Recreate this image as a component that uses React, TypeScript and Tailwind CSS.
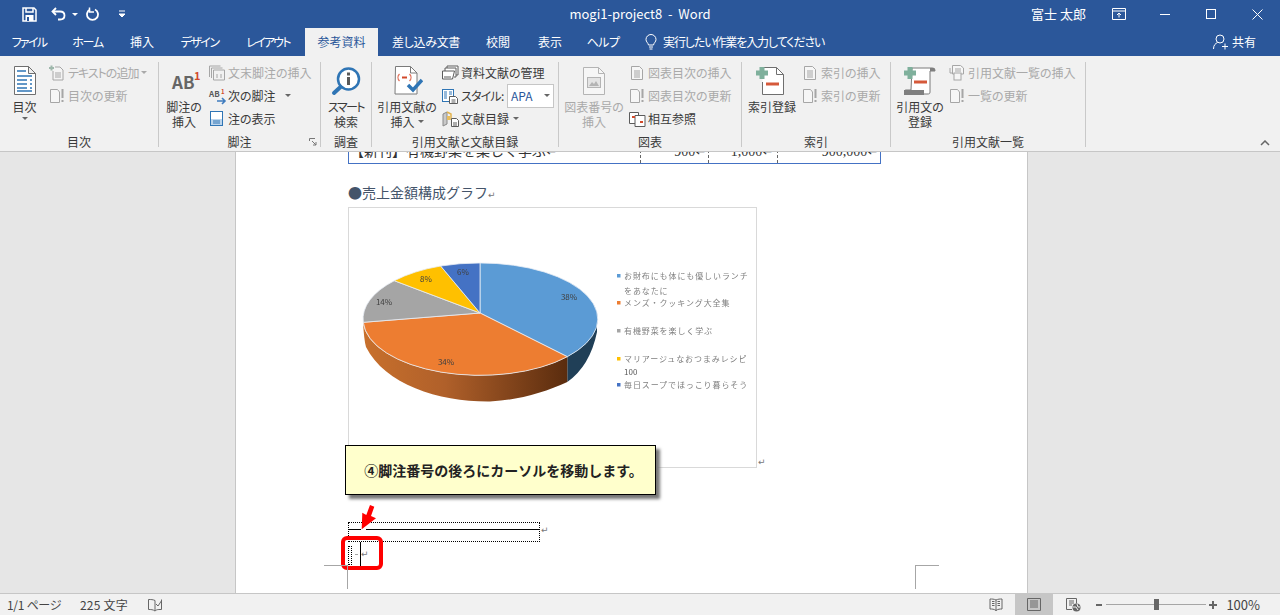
import type { ReactNode } from 'react'

/* ── Ribbon icons ───────────────────────────────────────────────────── */

const GRAY = '#a6a6a6'

function SmallIcon({ children, w = 16 }: { children: ReactNode; w?: number }) {
  return (
    <svg width={w} height="16" viewBox={`0 0 ${w} 16`} fill="none" className="shrink-0">
      {children}
    </svg>
  )
}

function AddTextIcon() {
  return (
    <SmallIcon>
      <path d="M0 3h5M2.500 .5v5" stroke="#9fb8ac" strokeWidth="2" />
      <path d="M6 2h5l3 3v10H4V6" stroke={GRAY} fill="#f4f4f4" />
      <path d="M6 8h6M6 10h6M6 12h6" stroke={GRAY} />
    </SmallIcon>
  )
}

function UpdateIcon({ color = GRAY }: { color?: string }) {
  return (
    <SmallIcon>
      <path d="M1.500 1.500h7l2 2.500v10.500h-9z" stroke={color} fill="#f6f6f6" />
      <path d="M13.500 1v9M13.500 12v2" stroke={color} strokeWidth="2" />
    </SmallIcon>
  )
}

function EndnoteIcon() {
  return (
    <SmallIcon>
      <path d="M.5 12V1h11M2.500 13V3h11M4.500 15V5h11v10z" stroke={GRAY} />
      <path d="M8 9v4M12 9v4" stroke={GRAY} />
    </SmallIcon>
  )
}

function NextNoteIcon() {
  return (
    <div className="relative h-[16px] w-[18px] shrink-0 text-[8px] leading-[11px] font-bold text-[#595959]">
      AB
      <span className="absolute left-[12px] -top-[2px] text-[6px] text-[#d2492a]">1</span>
      <svg width="10" height="8" viewBox="0 0 10 8" className="absolute left-[8px] top-[9px]">
        <path d="M0 4h8M5 1l3 3-3 3" stroke="#3f7cbf" strokeWidth="1.600" fill="none" />
      </svg>
    </div>
  )
}

function ShowNotesIcon() {
  return (
    <SmallIcon>
      <rect x="1.500" y=".5" width="12" height="14" stroke="#2f75b5" fill="#fff" />
      <rect x="2" y="8" width="11" height="6" fill="#bcd5ec" />
      <path d="M4 10h7M4 12h7" stroke="#2f75b5" />
    </SmallIcon>
  )
}

function ManageIcon() {
  return (
    <SmallIcon w={17}>
      <path d="M5 4V1h11v9h-2" stroke="#5c5c5c" fill="#fff" />
      <path d="M3 6V3h11v9h-2" stroke="#5c5c5c" fill="#fff" />
      <path d="M.5 6h12l-2 8H.5z" stroke="#5c5c5c" fill="#fff" />
      <path d="M2 12h7" stroke="#5c5c5c" />
    </SmallIcon>
  )
}

function StyleIcon() {
  return (
    <SmallIcon w={17}>
      <rect x=".5" y="1.500" width="11" height="12" stroke="#2f75b5" fill="#fff" />
      <path d="M2 4h3M2 6h3M2 8h3M2 10h3M7 4h3M7 6h3" stroke="#2f75b5" />
      <path d="M7.500 8.500h6l2 2v5h-8z" stroke="#5c5c5c" fill="#fff" />
      <path d="M9.500 12h4M9.500 14h4" stroke="#5c5c5c" />
    </SmallIcon>
  )
}

function BibliographyIcon() {
  return (
    <SmallIcon w={18}>
      <path d="M1 3l4-2v12l-4 2z" fill="#c9c9c9" stroke="#8a8a8a" />
      <path d="M5 1l4 2v6" stroke="#e2b34d" strokeWidth="1.500" />
      <rect x="5" y="5" width="3" height="4" fill="#e9bd5c" />
      <path d="M9.500 7.500h5l2 2v6h-7z" stroke="#5c5c5c" fill="#fff" />
      <path d="M11 12h4M11 14h4" stroke="#5c5c5c" />
    </SmallIcon>
  )
}

function TableListIcon() {
  return (
    <SmallIcon>
      <path d="M2.500 1.500h8l3 3v10h-11z" stroke={GRAY} fill="#f6f6f6" />
      <path d="M5 6h6M5 8h6M5 10h6M5 12h6" stroke={GRAY} />
    </SmallIcon>
  )
}

function CrossRefIcon() {
  return (
    <SmallIcon w={17}>
      <path d="M.5 1.500h9v11h-9z" stroke="#5c5c5c" fill="#fff" />
      <path d="M6 4.500h10v11H6z" stroke="#5c5c5c" fill="#fff" />
      <path d="M3 6h3" stroke="#d2492a" strokeWidth="2" />
      <path d="M11 11h3" stroke="#d2492a" strokeWidth="2" />
    </SmallIcon>
  )
}

function CitationsInsertIcon() {
  return (
    <SmallIcon>
      <path d="M3.500 .5h8l3 2.500v6H3.500z" stroke={GRAY} fill="#f6f6f6" />
      <path d="M1 3v5h2" stroke={GRAY} />
      <rect x="5" y="8" width="7" height="7" stroke={GRAY} fill="#f6f6f6" />
      <path d="M6 4h6M6 6h6" stroke={GRAY} />
    </SmallIcon>
  )
}

function TocBigIcon() {
  return (
    <svg width="22" height="29" viewBox="0 0 22 29" fill="none">
      <path d="M.5 .5h14l7 7v21H.5z" fill="#fff" stroke="#6f6f6f" />
      <path d="M14.500 .5v7h7z" stroke="#6f6f6f" fill="#f0f0f0" />
      <path d="M3 5h9M3 10h15M3 14h10M3 18h10M3 22h10M3 25h15" stroke="#2f75b5" strokeWidth="1.500" />
      <path d="M16 14h2M16 18h2M16 22h2" stroke="#2f75b5" strokeWidth="1.500" />
    </svg>
  )
}

function FootnoteBigIcon() {
  return (
    <div className="relative h-[24px] w-[32px] pt-[1px] pl-[4px] text-[17px] leading-[24px] font-bold text-[#666666]">
      AB
      <span className="absolute -top-[6px] left-[26px] text-[11px] text-[#d2492a]">1</span>
    </div>
  )
}

function SearchBigIcon() {
  return (
    <svg width="32" height="32" viewBox="0 0 32 32" fill="none">
      <circle cx="18.500" cy="14" r="10.500" fill="#fff" stroke="#2f75b5" strokeWidth="2.500" />
      <path d="M10.500 22L4 28" stroke="#2f75b5" strokeWidth="4" strokeLinecap="round" />
      <rect x="17" y="12" width="3" height="8" fill="#595959" />
      <rect x="17" y="7.500" width="3" height="3" fill="#595959" />
    </svg>
  )
}

function CitationBigIcon() {
  return (
    <svg width="32" height="30" viewBox="0 0 32 30" fill="none">
      <path d="M4.500 .5h15l6.500 6.500v21h-22z" fill="#fff" stroke="#7a7a7a" />
      <path d="M19.500 .5V7H26" stroke="#7a7a7a" />
      <path d="M8.500 8c-2 2-2 5 0 7M18.500 8c2 2 2 5 0 7" stroke="#e2725b" strokeWidth="1.300" />
      <path d="M11 11.500h5" stroke="#d2492a" strokeWidth="2" />
      <path d="M17 19l5 5 9-10" stroke="#2f75b5" strokeWidth="3.500" />
    </svg>
  )
}

function CaptionBigIcon() {
  return (
    <svg width="24" height="30" viewBox="0 0 24 30" fill="none">
      <path d="M1.500 1.500h15l6 6v21h-21z" fill="#f6f6f6" stroke="#b4b4b4" />
      <path d="M16.500 1.500v6h6" stroke="#b4b4b4" />
      <rect x="5.500" y="11.500" width="13" height="10" stroke="#b4b4b4" fill="#e4e4e4" />
      <path d="M7 20l3-4 2 2 2-3 3 5z" fill="#b4b4b4" />
    </svg>
  )
}

function IndexBigIcon() {
  return (
    <svg width="32" height="30" viewBox="0 0 32 30" fill="none">
      <path d="M6.500 8V1.500h14l7 7v20h-21V16" fill="#fff" stroke="#6f6f6f" />
      <path d="M20.500 1.500v7h7" stroke="#6f6f6f" />
      <path d="M0 7h12M6 1v12" stroke="#7fb09c" strokeWidth="5" />
      <path d="M10 18h13" stroke="#d5593a" strokeWidth="3" />
    </svg>
  )
}

function CitationMarkBigIcon() {
  return (
    <svg width="32" height="30" viewBox="0 0 32 30" fill="none">
      <path d="M8 2h20c2 0 3 1 3 3H26v21c0 2-1 2-3 2H2c-2-1-2-4 0-4h5z" fill="#fff" stroke="#7a7a7a" />
      <path d="M0 29v-5h20v5z" fill="#7f7f7f" />
      <path d="M26 2h4c1 0 1 1 1 3h-5z" fill="#7f7f7f" />
      <path d="M0 7h12M6 1v12" stroke="#7fb09c" strokeWidth="5" />
      <path d="M10 16h13" stroke="#d5593a" strokeWidth="3" />
    </svg>
  )
}

function Caret({ className = '' }: { className?: string }) {
  return <span className={`inline-block h-0 w-0 border-x-[3px] border-t-[3px] border-x-transparent border-t-[#666666] ${className}`} />
}

/* ── Ribbon parts ───────────────────────────────────────────────────── */

function SmallBtn({ icon, label, off, caret, kana }: { icon: ReactNode; label: string; off?: boolean; caret?: ReactNode; kana?: boolean }) {
  return (
    <div className={`flex h-[23px] items-center whitespace-nowrap ${off ? 'text-[#a9a9a9]' : 'text-[#3a3a3a]'}`}>
      <div className="w-[19px] shrink-0">{icon}</div>
      <span className={kana ? 'tracking-[-1px]' : ''}>{label}</span>
      {caret}
    </div>
  )
}

function BigBtn({ w, icon, lines, off, caret, kana }: { w: string; icon: ReactNode; lines: string[]; off?: boolean; caret?: ReactNode; kana?: boolean }) {
  return (
    <div className={`flex shrink-0 flex-col items-center leading-[15px] ${w} ${off ? 'text-[#a9a9a9]' : 'text-[#3a3a3a]'}`}>
      <div className="flex h-[37px] items-center justify-center">{icon}</div>
      {lines.map((l, i) => (
        <div key={l} className={`whitespace-nowrap ${kana && i === 0 ? 'tracking-[-1.5px]' : ''}`}>{l}</div>
      ))}
      {caret}
    </div>
  )
}

function Group({ w, label, children, launcher }: { w: string; label: string; children: ReactNode; launcher?: boolean }) {
  return (
    <div className={`relative flex h-[85px] shrink-0 flex-col border-r border-[#c9c9c9] ${w}`}>
      <div className="flex h-[72px]">{children}</div>
      <div className="h-[13px] text-center leading-[16px] whitespace-nowrap text-[#3a3a3a]">{label}</div>
      {launcher && (
        <svg width="8" height="8" viewBox="0 0 8 8" fill="none" className="absolute right-[3px] bottom-[1px]">
          <path d="M.5 3V.5H6M3 3l4 4M7 4v3H4" stroke="#777777" />
        </svg>
      )}
    </div>
  )
}

const tabs = [
  { label: 'ファイル', w: 'w-[58px]', track: 'tracking-[-1.7px]' },
  { label: 'ホーム', w: 'w-[60px]', track: 'tracking-[-1.2px] pr-[1px]' },
  { label: '挿入', w: 'w-[48px]', track: '' },
  { label: 'デザイン', w: 'w-[68px]', track: 'tracking-[-1.5px] pr-[1px]' },
  { label: 'レイアウト', w: 'w-[71px]', track: 'tracking-[-1.8px] pr-[3px]' },
  { label: '参考資料', w: 'w-[73px]', track: '', active: true },
  { label: '差し込み文書', w: 'w-[96px]', track: 'tracking-[-0.3px]' },
  { label: '校閲', w: 'w-[48px]', track: '' },
  { label: '表示', w: 'w-[56px]', track: '' },
  { label: 'ヘルプ', w: 'w-[50px]', track: 'tracking-[-0.5px]' },
]

/* ── Chart ──────────────────────────────────────────────────────────── */

const legend = [
  { y: 276, color: '#5b9bd5', lines: ['お財布にも体にも優しいランチ', 'をあなたに'] },
  { y: 303, color: '#ed7d31', lines: ['メンズ・クッキング大全集'] },
  { y: 331, color: '#a5a5a5', lines: ['有機野菜を楽しく学ぶ'] },
  { y: 359, color: '#ffc000', lines: ['マリアージュなおつまみレシピ', '100'] },
  { y: 385, color: '#4472c4', lines: ['毎日スープでほっこり暮らそう'] },
]

const pieLabels = [
  { x: 569, y: 300, t: '38%' },
  { x: 446, y: 365, t: '34%' },
  { x: 384, y: 305, t: '14%' },
  { x: 426, y: 282, t: '8%' },
  { x: 463, y: 275, t: '6%' },
]

function PieChart() {
  return (
    <svg width="407" height="259" viewBox="349 208 407 259" className="block font-['Noto_Sans_CJK_JP',sans-serif]">
      <defs>
        <linearGradient id="orangeSide" x1="0" x2="1" y1="0" y2="0">
          <stop offset="0" stopColor="#c8702c" />
          <stop offset="0.4" stopColor="#b0602a" />
          <stop offset="1" stopColor="#5a2c0e" />
        </linearGradient>
      </defs>
      <path d="M597 320A117 56 0 0 1 567.300 356.700V382Q590 366 597 332Z" fill="#203f57" />
      <path d="M567.300 356.700A117 56 0 0 1 363 322Q364 340 366 347C385 385 440 402 490 401.500C520 400 545 392 567.300 382Z" fill="url(#orangeSide)" />
      <g stroke="#e8eef5" strokeWidth="0.800">
        <path d="M480 313V263A117 56 0 0 1 567.300 356.700Z" fill="#5b9bd5" />
        <path d="M480 313L567.300 356.700A117 56 0 0 1 363.300 322.300Z" fill="#ed7d31" />
        <path d="M480 313L363.300 322.300A117 56 0 0 1 394.300 280.700Z" fill="#a5a5a5" />
        <path d="M480 313L394.300 280.700A117 56 0 0 1 440.700 266Z" fill="#ffc000" />
        <path d="M480 313L440.700 266A117 56 0 0 1 480 263Z" fill="#4472c4" />
      </g>
      {pieLabels.map((l) => (
        <text key={l.t} x={l.x} y={l.y} textAnchor="middle" fontSize="8" fill="#404040">{l.t}</text>
      ))}
      {legend.map((g) => (
        <g key={g.y}>
          <rect x="617" y={g.y - 2} width="3.500" height="3.500" fill={g.color} />
          {g.lines.map((t, i) => (
            <text
              key={t}
              x="624"
              y={g.y + 3 + i * (g.lines[1] === '100' ? 13 : 15)}
              fontSize="8"
              letterSpacing={t === '100' ? 0 : 0.9}
              fill={t === '100' ? '#595959' : '#7f7f7f'}
            >
              {t}
            </text>
          ))}
        </g>
      ))}
    </svg>
  )
}

/* ── App ────────────────────────────────────────────────────────────── */

export default function App() {
  return (
    <div className="relative flex h-[615px] w-[1280px] flex-col overflow-hidden bg-[#e6e6e6] font-['Noto_Sans_CJK_JP','Noto_Sans','DejaVu_Sans',sans-serif] text-[12px] [font-feature-settings:'palt']">
      {/* Title bar */}
      <div className="grid h-[28px] shrink-0 grid-cols-[1fr_auto_1fr] items-center bg-[#2b579a] text-white">
        <div className="flex items-center pl-[22px]">
          <svg width="15" height="15" viewBox="0 0 15 15" fill="none">
            <path d="M1 1h11l2 2v11H1z" stroke="#fff" strokeWidth="1.500" />
            <path d="M4 1v4h7V1" stroke="#fff" strokeWidth="1.500" />
            <rect x="3.500" y="8" width="8" height="6" fill="#fff" />
            <rect x="5" y="10" width="2" height="4" fill="#2b579a" />
          </svg>
          <svg width="16" height="14" viewBox="0 0 16 14" fill="none" className="ml-[14px]">
            <path d="M5 1L1.500 4.500 5 8" stroke="#fff" strokeWidth="1.800" />
            <path d="M2 4.500h7c6 0 6 8 0 8H7" stroke="#fff" strokeWidth="1.800" />
          </svg>
          <Caret className="ml-[5px] border-t-white" />
          <svg width="14" height="14" viewBox="0 0 14 14" fill="none" className="ml-[8px]">
            <path d="M4 2.500a5.500 5.500 0 1 0 5 0" stroke="#fff" strokeWidth="1.800" />
            <path d="M3.500 .5v4.500H8" stroke="#fff" strokeWidth="1.500" />
          </svg>
          <svg width="8" height="8" viewBox="0 0 8 8" className="ml-[18px]">
            <path d="M1 1h6M1 4h6l-3 3z" stroke="#fff" fill="#fff" />
          </svg>
        </div>
        <div className="text-[13px] whitespace-pre">mogi1-project8  -  Word</div>
        <div className="flex items-center justify-end">
          <span className="mr-[9px] text-[13px] whitespace-pre">富士 太郎</span>
          <div className="flex w-[47px] justify-center">
            <svg width="14" height="12" viewBox="0 0 14 12" fill="none">
              <path d="M.5 .5h13v11H.5zM.5 3h13M7 9.500V5M5 7l2-2 2 2" stroke="#fff" />
            </svg>
          </div>
          <div className="flex w-[46px] justify-center">
            <div className="h-px w-[10px] bg-white" />
          </div>
          <div className="flex w-[46px] justify-center">
            <div className="h-[10px] w-[10px] border border-white" />
          </div>
          <div className="flex w-[46px] justify-center">
            <svg width="11" height="11" viewBox="0 0 11 11"><path d="M.5 .5l10 10M10.500 .5l-10 10" stroke="#fff" /></svg>
          </div>
        </div>
      </div>

      {/* Tabs */}
      <div className="flex h-[28px] shrink-0 items-center bg-[#2b579a] text-white">
        {tabs.map((t) => (
          <div
            key={t.label}
            className={`flex h-full items-center justify-center ${t.w} ${t.track} ${t.active ? 'bg-[#f1f1f1] text-[#2b579a]' : ''}`}
          >
            {t.label}
          </div>
        ))}
        <svg width="12" height="16" viewBox="0 0 12 16" fill="none" className="ml-[17px]">
          <path d="M3.500 11C3 8.500 1 8 1 5.500a5 5 0 0 1 10 0C11 8 9 8.500 8.500 11zM4 13h4M4.500 15h3" stroke="#fff" />
        </svg>
        <span className="ml-[6px] tracking-[-1.1px]">実行したい作業を入力してください</span>
        <div className="ml-auto flex items-center pr-[24px]">
          <svg width="15" height="16" viewBox="0 0 15 16" fill="none">
            <circle cx="7" cy="5" r="4" stroke="#fff" />
            <path d="M.5 15c0-4 2-5.500 4-6.500M9 12.500h6M12 9.500v6" stroke="#fff" />
          </svg>
          <span className="ml-[4px]">共有</span>
        </div>
      </div>

      {/* Ribbon */}
      <div className="relative flex h-[96px] shrink-0 border-b border-[#c6c6c6] bg-[#f1f1f1] pt-[6px]">
        <Group w="w-[159px]" label="目次">
          <BigBtn w="w-[49px]" icon={<TocBigIcon />} lines={['目次']} caret={<Caret className="mt-[3px]" />} />
          <div className="-mt-px">
            <SmallBtn off kana icon={<AddTextIcon />} label="テキストの追加" caret={<Caret className="ml-[3px] border-t-[#a9a9a9]" />} />
            <SmallBtn off icon={<UpdateIcon />} label="目次の更新" />
          </div>
        </Group>
        <Group w="w-[162px]" label="脚注" launcher>
          <BigBtn w="w-[50px]" icon={<FootnoteBigIcon />} lines={['脚注の', '挿入']} />
          <div className="-mt-px">
            <SmallBtn off icon={<EndnoteIcon />} label="文末脚注の挿入" />
            <SmallBtn icon={<NextNoteIcon />} label="次の脚注" caret={<Caret className="ml-[9px]" />} />
            <SmallBtn icon={<ShowNotesIcon />} label="注の表示" />
          </div>
        </Group>
        <Group w="w-[51px]" label="調査">
          <BigBtn kana w="w-[50px]" icon={<SearchBigIcon />} lines={['スマート', '検索']} />
        </Group>
        <Group w="w-[187px]" label="引用文献と文献目録">
          <BigBtn
            w="w-[70px]"
            icon={<CitationBigIcon />}
            lines={['引用文献の']}
            caret={
              <div className="flex items-center">
                挿入
                <Caret className="ml-[3px]" />
              </div>
            }
          />
          <div className="-mt-px">
            <SmallBtn icon={<ManageIcon />} label="資料文献の管理" />
            <div className="flex h-[23px] items-center whitespace-nowrap text-[#3a3a3a]">
              <div className="w-[19px] shrink-0"><StyleIcon /></div>
              <span className="w-[46px] tracking-[-0.8px]">スタイル:</span>
              <div className="flex h-[24px] w-[47px] items-center justify-between border border-[#c6c6c6] bg-white px-[3px] text-[#2b579a]">
                APA
                <Caret />
              </div>
            </div>
            <SmallBtn icon={<BibliographyIcon />} label="文献目録" caret={<Caret className="ml-[4px]" />} />
          </div>
        </Group>
        <Group w="w-[183px]" label="図表">
          <BigBtn off w="w-[70px]" icon={<CaptionBigIcon />} lines={['図表番号の', '挿入']} />
          <div className="-mt-px">
            <SmallBtn off icon={<TableListIcon />} label="図表目次の挿入" />
            <SmallBtn off icon={<UpdateIcon />} label="図表目次の更新" />
            <SmallBtn icon={<CrossRefIcon />} label="相互参照" />
          </div>
        </Group>
        <Group w="w-[149px]" label="索引">
          <BigBtn w="w-[60px]" icon={<IndexBigIcon />} lines={['索引登録']} />
          <div className="-mt-px">
            <SmallBtn off icon={<TableListIcon />} label="索引の挿入" />
            <SmallBtn off icon={<UpdateIcon />} label="索引の更新" />
          </div>
        </Group>
        <Group w="w-[195px]" label="引用文献一覧">
          <BigBtn w="w-[58px]" icon={<CitationMarkBigIcon />} lines={['引用文の', '登録']} />
          <div className="-mt-px">
            <SmallBtn off icon={<CitationsInsertIcon />} label="引用文献一覧の挿入" />
            <SmallBtn off icon={<UpdateIcon />} label="一覧の更新" />
          </div>
        </Group>
        <svg width="10" height="6" viewBox="0 0 10 6" fill="none" className="absolute right-[10px] bottom-[5px]">
          <path d="M1 5l4-4 4 4" stroke="#666666" strokeWidth="1.500" />
        </svg>
      </div>

      {/* Document */}
      <div className="h-[441px] shrink-0 overflow-hidden pl-[235px]">
        <div className="flex h-full w-[793px] flex-col overflow-hidden border-x border-[#c6c6c6] bg-white pl-[112px] font-['Liberation_Serif','Noto_Sans_CJK_JP','DejaVu_Sans',serif] text-[14px] text-[#333333] [font-feature-settings:normal]">
          <div className="grid h-[12px] w-[533px] shrink-0 grid-cols-[291px_68px_69px_1fr] overflow-hidden border-x border-b border-[#4472c4] leading-[14px]">
            <div className="-mt-[7px] pl-[1px] whitespace-nowrap">【新刊】有機野菜を楽しく学ぶ↵</div>
            <div className="-mt-[7px] border-l border-dashed border-[#666666] pr-[1px] text-right">900↵</div>
            <div className="-mt-[7px] border-l border-dashed border-[#666666] pr-[3px] text-right">1,000↵</div>
            <div className="-mt-[7px] border-l border-dashed border-[#666666] pr-[1px] text-right">900,000↵</div>
          </div>
          <div className="mt-[19px] h-[18px] leading-[18px] whitespace-nowrap text-[#44546a]">
            <span className="font-['Noto_Sans_CJK_JP',sans-serif]">●</span>売上金額構成グラフ
            <span className="text-[9px] text-[#777777]">↵</span>
          </div>
          <div className="mt-[6px] flex items-end">
            <div className="h-[261px] w-[409px] shrink-0 border border-[#d9d9d9] blur-[0.3px]">
              <PieChart />
            </div>
            <span className="ml-[1px] text-[9px] leading-[12px] text-[#777777]">↵</span>
          </div>

          {/* Footnote separator */}
          <div className="mt-[54px] flex items-center">
            <div className="h-[20px] w-[192px] shrink-0 border border-dotted border-black pt-[6px]">
              <div className="flex h-px">
                <div className="w-[12px] bg-black" />
                <div className="ml-[5px] flex-1 bg-black" />
              </div>
            </div>
            <span className="-mt-[4px] ml-[1px] text-[9px] leading-[12px] text-[#777777]">↵</span>
          </div>
          <div className="flex h-[24px] items-center">
            <div className="mt-[2px] h-[19px] w-[4px] border border-dotted border-black" />
            <div className="ml-[3px] h-px w-[3px] bg-[#a6a6a6]" />
            <div className="ml-[2px] h-[24px] w-px bg-black" />
            <span className="-mt-[1px] text-[9px] leading-[12px] text-[#777777]">↵</span>
          </div>
        </div>
      </div>

      {/* Status bar */}
      <div className="flex h-[22px] shrink-0 items-center border-t border-[#c6c6c6] bg-[#f1f1f1] pl-[7px] text-[12px] text-[#444444]">
        <span className="w-[73px] tracking-[-0.3px]">1/1 ページ</span>
        <span className="w-[68px] tracking-[0.2px]">225 文字</span>
        <svg width="14" height="14" viewBox="0 0 14 14" fill="none">
          <path d="M7 2.500C5 1.500 3 1.500 .5 1.500v10c2.500 0 4.500 0 6.500 1.500 2-1.500 2-1.500 6.500-1.500v-10" stroke="#666666" />
          <path d="M7 2.500V13M8 6l2 2 4-6" stroke="#666666" />
        </svg>
        <div className="ml-auto flex h-full items-center pr-[20px]">
          <svg width="14" height="14" viewBox="0 0 14 14" fill="none">
            <path d="M7 2C5 1 3 1 1 1v10c2 0 4 0 6 1.500 2-1.500 4-1.500 6-1.500V1c-2 0-4 0-6 1zM7 2v11M3 3.500h2.500M3 5.500h2.500M3 7.500h2.500M8.500 3.500H11M8.500 5.500H11M8.500 7.500H11" stroke="#666666" />
          </svg>
          <div className="ml-[12px] flex h-full w-[38px] items-center justify-center bg-[#c6c6c6]">
            <svg width="14" height="13" viewBox="0 0 14 13" fill="none">
              <path d="M.5 .5h13v12H.5zM3 3h8M3 5h8M3 7h8M3 9h8" stroke="#666666" />
            </svg>
          </div>
          <svg width="15" height="14" viewBox="0 0 15 14" fill="none" className="ml-[13px]">
            <path d="M6 11.500H.5V.5h10v5M3 3h5M3 5h5M3 7h3" stroke="#666666" />
            <circle cx="10.500" cy="9.500" r="4" fill="#666666" />
            <path d="M7 9h3l2 3M11 6l1 3h2" stroke="#f1f1f1" />
          </svg>
          <div className="ml-[15px] h-[2px] w-[6px] bg-[#666666]" />
          <div className="relative ml-[4px] h-px w-[100px] bg-[#a6a6a6]">
            <div className="absolute -top-[5px] left-[48px] h-[11px] w-[5px] bg-[#666666]" />
          </div>
          <svg width="8" height="8" viewBox="0 0 8 8" className="ml-[3px]">
            <path d="M0 4h8M4 0v8" stroke="#666666" strokeWidth="2" />
          </svg>
          <span className="ml-[9px] text-[13px]">100%</span>
        </div>
      </div>

      {/* Callout */}
      <div className="absolute top-[445px] left-[345px] flex h-[50px] w-[311px] items-center justify-center border border-black bg-[#ffffcc] pl-[6px] text-[14px] font-bold text-[#222222] shadow-[4px_4px_3px_#777777] [font-feature-settings:normal]">
        ④脚注番号の後ろにカーソルを移動します。
      </div>

      {/* Red arrow */}
      <svg width="20" height="28" viewBox="0 0 20 28" className="absolute top-[504px] left-[358px]">
        <path d="M12 1L8.300 11 4.300 8.700 3.700 25.300 18 14.300 13 12 16.300 2.700z" fill="#ff0000" />
      </svg>

      {/* Red highlight */}
      <div className="absolute top-[536px] left-[341px] h-[34px] w-[42px] rounded-[6px] border-[4px] border-[#ff0000]" />

      {/* Crop marks */}
      <div className="absolute top-[565px] left-[324px] h-[24px] w-[24px] border-r border-t border-[#a6a6a6]" />
      <div className="absolute top-[565px] left-[915px] h-[24px] w-[24px] border-l border-t border-[#a6a6a6]" />
    </div>
  )
}
